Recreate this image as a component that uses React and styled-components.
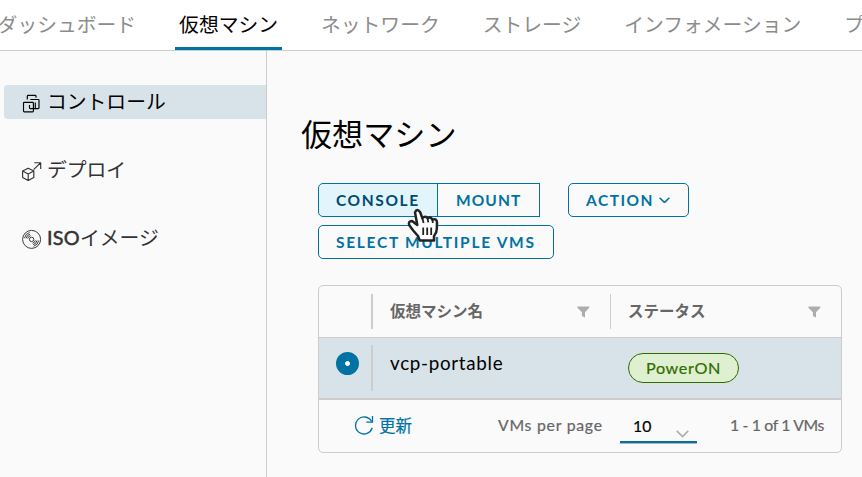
import React from 'react';
import styled, { createGlobalStyle } from 'styled-components';

const BLUE = '#0072a3';
const LINE = '#cccccc';

const GlobalStyle = createGlobalStyle`
  *, *::before, *::after { box-sizing: border-box; }
  body {
    margin: 0;
    overflow: hidden;
    background: #fafafa;
    color: #000;
    font-family: Lato, 'Noto Sans CJK JP', sans-serif;
  }
  button { font-family: inherit; background: none; margin: 0; padding: 0; border: 0; }
  svg { display: block; flex: none; }
`;

const Page = styled.div`
  position: relative;
  width: 862px;
  height: 477px;
  display: grid;
  grid-template-rows: 51px 1fr;
  overflow: hidden;
`;

const Nav = styled.nav`
  display: flex;
  background: #fff;
  border-bottom: 1px solid ${LINE};
  overflow: hidden;
`;

const Tabs = styled.div`
  display: flex;
  gap: 35px;
  margin-left: -6.4px;
  height: 51px;
`;

const Tab = styled.a`
  flex: none;
  height: 51px;
  padding: 0 4px;
  line-height: 49px;
  font-size: 19.8px;
  white-space: nowrap;
  color: ${(p) => (p.$active ? '#000' : '#8c8c8c')};
  box-shadow: ${(p) => (p.$active ? `inset 0 -4px 0 ${BLUE}` : 'none')};
`;

const Body = styled.div`
  display: grid;
  grid-template-columns: 267px 1fr;
`;

const Sidebar = styled.aside`
  display: flex;
  flex-direction: column;
  gap: 34px;
  padding: 34px 0 0 4px;
  border-right: 1px solid ${LINE};
`;

const SideItem = styled.a`
  display: flex;
  align-items: center;
  height: 34px;
  padding-left: 17px;
  gap: ${(p) => (p.$active ? 7 : 5)}px;
  border-radius: 4px 0 0 4px;
  font-size: 19.8px;
  line-height: 34px;
  color: ${(p) => (p.$active ? '#000' : '#333')};
  background: ${(p) => (p.$active ? '#d8e3e9' : 'transparent')};
  svg { margin-top: 2px; }
`;

const SideText = styled.span`
  margin-top: -3px;
  white-space: nowrap;
`;

const Latin = styled.span`
  -webkit-text-stroke: 0.5px currentColor;
  letter-spacing: 0.3px;
`;

const Main = styled.main`
  padding: 62px 20px 0 34px;
`;

const Title = styled.h1`
  margin: 0;
  height: 42px;
  line-height: 43px;
  font-size: 31.1px;
  font-weight: 400;
`;

const Actions = styled.div`
  display: flex;
  flex-wrap: wrap;
  gap: 8px 28px;
  margin: 28px 0 0 17px;
`;

const Group = styled.div`
  display: flex;
`;

const Button = styled.button`
  width: ${(p) => p.$w}px;
  height: 34px;
  padding-left: ${(p) => (p.$join === 'end' ? 18 : 17)}px;
  margin-left: ${(p) => (p.$join === 'end' ? '-1px' : '0')};
  display: flex;
  align-items: center;
  gap: 5px;
  border: 1px solid ${BLUE};
  border-radius: ${(p) => ({ start: '5px 0 0 5px', end: '0' }[p.$join] || '5px')};
  color: ${(p) => (p.$hover ? '#004a70' : BLUE)};
  background: ${(p) => (p.$hover ? '#e3f5fc' : 'transparent')};
  font-size: 15.5px;
  font-weight: 700;
  letter-spacing: ${(p) => p.$ls}px;
  line-height: 32px;
  white-space: nowrap;
`;

const Grid = styled.section`
  margin: 26px 0 0 17px;
  width: 524px;
  height: 168px;
  border: 1px solid ${LINE};
  border-radius: 5px;
  display: grid;
  grid-template-rows: 52px 60px 1fr;
  overflow: hidden;
`;

const Row = styled.div`
  display: grid;
  grid-template-columns: 52px 239px 1fr;
  background: ${(p) => (p.$selected ? '#d8e3e9' : 'transparent')};
  border-bottom: ${(p) => (p.$selected ? 'none' : `1px solid ${LINE}`)};
  padding: ${(p) => (p.$selected ? 7 : 8)}px 0;
`;

const Cell = styled.div`
  display: flex;
  align-items: ${(p) => (p.$top ? 'flex-start' : 'center')};
  justify-content: space-between;
  border-left: ${(p) => p.$sep || 0}px solid ${LINE};
  padding: 0 20px 0 ${(p) => 18 - (p.$sep || 0)}px;
`;

const HeadText = styled.span`
  margin: -2px 0 0 ${(p) => (p.$nudge ? 1 : 0)}px;
  font-size: 15.5px;
  font-weight: 700;
  line-height: 34px;
  color: #666;
`;

const Name = styled.span`
  margin-left: 1px;
  font-size: 18.8px;
  line-height: 35px;
  letter-spacing: 0.7px;
`;

const Radio = styled.span`
  flex: none;
  width: 23px;
  height: 23px;
  margin: 7px 0 0 -1px;
  border: 9px solid ${BLUE};
  border-radius: 50%;
  background: radial-gradient(circle, #fff 2.2px, ${BLUE} 3px);
`;

const Badge = styled.span`
  width: 111px;
  height: 30px;
  margin-top: 8px;
  border: 1px solid #306b00;
  border-radius: 15px;
  background: #dff0d0;
  color: #306b00;
  text-align: center;
  font-size: 16.2px;
  letter-spacing: 0.6px;
  line-height: 27px;
  -webkit-text-stroke: 0.2px currentColor;
`;

const Footer = styled.footer`
  display: flex;
  align-items: flex-start;
  border-top: 2px solid ${LINE};
  font-size: 15.8px;
  color: #666;
  white-space: nowrap;
  -webkit-text-stroke: 0.2px currentColor;
`;

const Refresh = styled.button`
  display: flex;
  align-items: center;
  gap: 5px;
  width: 144px;
  height: 50px;
  margin-left: 35px;
  color: ${BLUE};
  font-size: 16.5px;
`;

const FootText = styled.span`
  flex: none;
  width: ${(p) => p.$w}px;
  line-height: 49px;
  letter-spacing: ${(p) => p.$ls}px;
`;

const PageSize = styled.div`
  display: flex;
  justify-content: space-between;
  width: 77px;
  height: 29px;
  margin: 14px 33px 0 0;
  padding: 0 8px 0 13px;
  color: #000;
  line-height: 24px;
  border-bottom: 2px solid ${BLUE};
  box-shadow: 0 1px 0 #b3b3b3;
  svg { margin-top: 16px; }
`;

const Pointer = styled.svg`
  position: absolute;
  left: 406px;
  top: 207px;
`;

const VmIcon = () => (
  <svg width="19" height="20" viewBox="0 0 19 20" fill="none" stroke="currentColor" strokeWidth="1.15">
    <path d="M6.3 6.5V3.2Q6.3 2.4 7.1 2.4H14.2Q15 2.4 15 3.2V4.8" />
    <path d="M9.3 6.5H17.2Q18 6.5 18 7.3V14.8Q18 15.6 17.2 15.6H14.4" />
    <rect x="2.5" y="9.4" width="9.9" height="9.4" rx=".8" />
    <path d="M8.5 12V14.8Q8.5 15.6 9.3 15.6H14.3V9.5" />
  </svg>
);

const DeployIcon = () => (
  <svg width="21" height="20" viewBox="0 0 21 20" fill="none" stroke="currentColor" strokeWidth="1.15" strokeLinejoin="round">
    <path d="M7.2 7.2 12.8 10.1V16.6L7.2 19.5 1.6 16.6V10.1ZM1.6 10.1 7.2 13 12.8 10.1M7.2 13V19.5M12.6 8.7 19.5 1.9M13.3 1.7H19.7V8" />
  </svg>
);

const DiscIcon = () => (
  <svg width="21" height="20" viewBox="0 0 21 20" fill="none" stroke="currentColor" strokeWidth=".95">
    <circle cx="10.6" cy="10.4" r="9" />
    <circle cx="10.6" cy="10.4" r="2.2" />
    <path d="M3.5 9.2A7.2 7.2 0 0 1 8.6 3.5M5.2 9.3A5.5 5.5 0 0 1 9.1 5.1M6.8 9.5A3.9 3.9 0 0 1 9.7 6.6M17.7 11.6A7.2 7.2 0 0 1 12.6 17.3M16 11.5A5.5 5.5 0 0 1 12.1 15.7M14.4 11.3A3.9 3.9 0 0 1 11.5 14.2" />
  </svg>
);

const Filter = () => (
  <svg width="13" height="12" viewBox="0 0 13 12">
    <path fill="#adadad" d="M.4.5H12.3V1.8L8 6.3V11.5L4.9 10V6.3L.4 1.8Z" />
  </svg>
);

const Chevron = ({ size, color, weight }) => (
  <svg width={size} height={size * 0.6} viewBox="0 0 10 6" fill="none" stroke={color} strokeWidth={weight}>
    <path d="M.6.7 5 5.1 9.4.7" />
  </svg>
);

const RefreshIcon = () => (
  <svg width="20" height="20" viewBox="0 0 20 20" fill="none" stroke="currentColor" strokeWidth="1.3">
    <path d="M18.2 12.8A8.5 8.5 0 1 1 17.4 6.2M18.5 1V7.2H12.3" />
  </svg>
);

const HandPointer = () => (
  <Pointer width="36" height="38" viewBox="0 0 36 38">
    <path
      d="M9 5.4Q11 .9 14.2 5.2L16.4 11.2Q19.4 8.4 21.6 11.3 24.5 9.1 26.4 12.7 30.7 10.9 31 15.7L30.8 22Q30.6 26.3 28 29V33.6H13.8L12 29 7.2 23.5 3.3 18.3Q1.8 14 6.1 14L11.3 18Z"
      fill="#fff"
      stroke="#222"
      strokeWidth="2.5"
      strokeLinejoin="round"
    />
    <path d="M16.4 11.2 17.6 16M21.6 11.3 22.3 15.4M26.4 12.7 26.8 16M17.2 20.5V28M21.2 20.5V28M25.2 20.5V28" fill="none" stroke="#222" strokeWidth="1.8" />
  </Pointer>
);

const TABS = ['ダッシュボード', '仮想マシン', 'ネットワーク', 'ストレージ', 'インフォメーション', 'プ'];

export default function App() {
  return (
    <>
      <GlobalStyle />
      <Page>
        <Nav>
          <Tabs>
            {TABS.map((label) => (
              <Tab key={label} $active={label === '仮想マシン'}>{label}</Tab>
            ))}
          </Tabs>
        </Nav>
        <Body>
          <Sidebar>
            <SideItem $active><VmIcon /><SideText>コントロール</SideText></SideItem>
            <SideItem><DeployIcon /><SideText>デプロイ</SideText></SideItem>
            <SideItem><DiscIcon /><SideText><Latin>ISO</Latin>イメージ</SideText></SideItem>
          </Sidebar>
          <Main>
            <Title>仮想マシン</Title>
            <Actions>
              <Group>
                <Button $w={120} $ls={1.6} $join="start" $hover>CONSOLE</Button>
                <Button $w={103} $ls={1.1} $join="end">MOUNT</Button>
              </Group>
              <Button $w={121} $ls={1.5}>ACTION<Chevron size={11} color={BLUE} weight={1.4} /></Button>
              <Button $w={236} $ls={1.7}>SELECT MULTIPLE VMS</Button>
            </Actions>
            <Grid>
              <Row>
                <Cell />
                <Cell $sep={2}><HeadText $nudge>仮想マシン名</HeadText><Filter /></Cell>
                <Cell $sep={1}><HeadText>ステータス</HeadText><Filter /></Cell>
              </Row>
              <Row $selected>
                <Cell $top><Radio /></Cell>
                <Cell $top $sep={2}><Name>vcp-portable</Name></Cell>
                <Cell $top><Badge>PowerON</Badge></Cell>
              </Row>
              <Footer>
                <Refresh><RefreshIcon />更新</Refresh>
                <FootText $w={122} $ls={0.75}>VMs per page</FootText>
                <PageSize>10<Chevron size={13} color="#adadad" weight={1.2} /></PageSize>
                <FootText $w={95} $ls={-0.35}>1 - 1 of 1 VMs</FootText>
              </Footer>
            </Grid>
          </Main>
        </Body>
        <HandPointer />
      </Page>
    </>
  );
}
